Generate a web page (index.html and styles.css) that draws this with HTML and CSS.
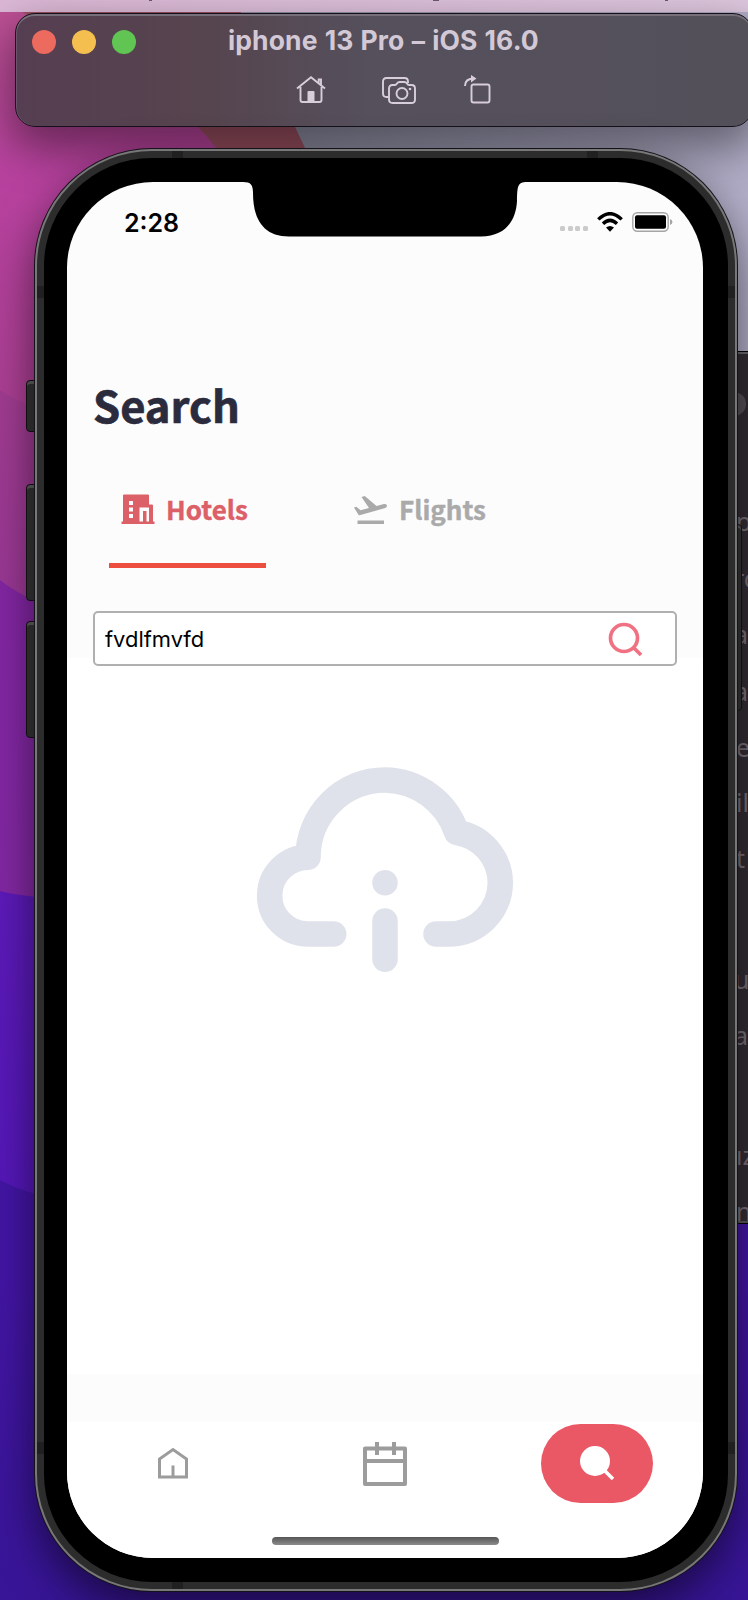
FILE: index.html
```html
<!DOCTYPE html>
<html lang="en">
<head>
<meta charset="utf-8">
<title>iphone 13 Pro – iOS 16.0</title>
<link rel="stylesheet" href="styles.css">
</head>
<body>
<main class="desktop">
  <svg class="wallpaper" viewBox="0 0 748 1600" preserveAspectRatio="none" aria-hidden="true">
    <defs>
      <linearGradient id="w1" x1="0" y1="0" x2="0" y2="1"><stop offset="0" stop-color="#bd5293"/><stop offset=".4" stop-color="#b8429f"/><stop offset="1" stop-color="#a83e90"/></linearGradient>
      <linearGradient id="w2" x1="0" y1="0" x2="0" y2="1"><stop offset="0" stop-color="#a03c90"/><stop offset="1" stop-color="#8d2f98"/></linearGradient>
      <linearGradient id="w3" x1="0" y1="0" x2="0" y2="1"><stop offset="0" stop-color="#8226a2"/><stop offset="1" stop-color="#8228a2"/></linearGradient>
      <linearGradient id="w4" x1="0" y1="0" x2="0" y2="1"><stop offset="0" stop-color="#5c1ab8"/><stop offset="1" stop-color="#5417b8"/></linearGradient>
      <linearGradient id="w5" x1="0" y1="0" x2="0" y2="1"><stop offset="0" stop-color="#4315a4"/><stop offset=".8" stop-color="#4315a4"/><stop offset="1" stop-color="#371596"/></linearGradient>
      <linearGradient id="w6" x1="0" y1="0" x2="1" y2="0"><stop offset="0" stop-color="#747888"/><stop offset="1" stop-color="#b2aec8"/></linearGradient>
    </defs>
    <rect width="748" height="1600" fill="url(#w5)"/>
    <path d="M0 0H748V400H400Z" fill="url(#w6)"/>
    <path d="M0 0H235L306 150V400H0Z" fill="#9a5060"/>
    <path d="M0 0L110 60Q180 100 217 149V430H0Z" fill="url(#w1)"/>
    <path d="M0 390Q20 405 60 412V900H0Z" fill="url(#w2)"/>
    <path d="M0 580Q20 596 60 612V920H0Z" fill="url(#w3)"/>
    <path d="M0 891Q20 896 60 899V1202L36 1194Q20 1190 0 1180Z" fill="url(#w4)"/>
  </svg>
  <section class="editor" aria-hidden="true">
    <span class="dot"></span>
    <div class="code"><span>p</span><span class="shift">ro</span><span class="shift">al</span><span class="shift">a</span><span>e</span><span>il</span><span>t</span><span></span><span class="shift">uc</span><span class="shift">as</span><span></span><span>ız</span><span>n</span></div>
  </section>
  <div class="menubar" aria-hidden="true"><i></i><i></i><i></i></div>
  <header class="titlebar">
    <div class="title-row">
      <div class="lights"><i class="close"></i><i class="min"></i><i class="max"></i></div>
      <h2 class="title">iphone 13 Pro – iOS 16.0</h2>
    </div>
    <div class="tools">
      <svg width="32" height="30" viewBox="0 0 32 30"><path d="M2 13.5 16 2.3 30 13.5M5.500 12v13Q5.500 27 7.500 27H24.500Q26.500 27 26.500 25V12M23.700 8.500V4.500H26V10"/><path class="solid" d="M12.500 27V17Q12.500 16 13.500 16H18.500Q19.500 16 19.500 17V27Z"/></svg>
      <svg width="36" height="30" viewBox="0 0 36 30"><path d="M7.500 22H5.500Q2 22 2 18.500V6.500Q2 3 5.500 3H23.500Q27 3 27 6.500V8"/><path d="M11.500 10H14Q15 10 16 8.500 17 7 18.500 7H23.500Q25 7 26 8.500 27 10 28 10H30.500Q34 10 34 13.500V24.500Q34 28 30.500 28H11.500Q8 28 8 24.500V13.500Q8 10 11.500 10Z"/><circle cx="21" cy="18.500" r="5.500"/><circle class="solid" cx="29" cy="14" r="1.300"/></svg>
      <svg width="30" height="32" viewBox="0 0 30 32"><rect x="8.500" y="11.500" width="18" height="18" rx="2"/><path d="M2 13Q2 5.500 11 5.500"/><path class="solid" d="M8 2 13.500 5.500 8 9.500Z"/></svg>
    </div>
  </header>
  <i class="key k1"></i><i class="key k2"></i><i class="key k3"></i><i class="key k4"></i>
  <section class="phone">
    <i class="band b1"></i><i class="band b2"></i><i class="band b3"></i><i class="band b5"></i><i class="band b6"></i><i class="band b7"></i><i class="band b8"></i>
    <div class="bezel">
      <div class="screen">
        <svg class="notch" viewBox="0 0 284 55" aria-hidden="true"><path d="M0 0C8 0 10 3 10 11C10 38 21 54.500 46 54.500H238C263 54.500 273 38 274 19C274.500 5 274 0 284 0Z"/></svg>
        <div class="status">
          <span class="time">2:28</span>
          <div class="signals">
            <span class="cell"><i></i><i></i><i></i><i></i></span>
            <svg class="wifi" width="28" height="20" viewBox="0 0 28 20"><path d="M2.300 7.400Q14-4 25.700 7.400" /><path d="M7 11.800Q14 5 21 11.800"/><path class="wedge" d="M10 15.600Q14 12.200 18 15.600L14 19.700Z"/></svg>
            <svg class="battery" width="41" height="20" viewBox="0 0 41 20"><rect x=".8" y=".8" width="35.400" height="18.400" rx="4.500"/><rect class="fill" x="3" y="3.300" width="31" height="13.400" rx="2"/><path class="tip" d="M38 7Q40.500 8 40.500 10T38 13Z"/></svg>
          </div>
        </div>
        <div class="content">
          <h1 class="heading">Search</h1>
          <nav class="tabs">
            <a class="tab active"><svg width="34" height="30" viewBox="0 0 34 30"><path fill-rule="evenodd" d="M2 27.500V1.500Q2 .5 3 .5H27Q28 .5 28 1.500V10.500H31Q32 10.500 32 11.500V27.500H33.500V30H.5V27.500ZM8 7V11H12V7ZM8 13.500V17.500H12V13.500ZM8 20V24H12V20ZM18.500 13.500V27.500H22V17H25.500V27.500H28V13.500Z"/></svg><span>Hotels</span></a>
            <a class="tab"><svg width="35" height="30" viewBox="0 0 35 30"><path d="M4.500 26.500H31V30H4.500ZM1 13.500 3.300 12.700 7.500 16.200 16 14 8.500 3 11.800 2 23.500 12 31 10Q33.500 9.500 34 11.500 34.200 13.200 32.300 14L7.500 21 5.800 21.300Z"/></svg><span>Flights</span></a>
          </nav>
          <div class="field"><span>fvdlfmvfd</span><svg width="36" height="36" viewBox="0 0 36 36"><circle cx="17" cy="17" r="13.500"/><path d="M26.500 26.500 34 34"/></svg></div>
        </div>
        <div class="results">
          <svg width="260" height="208" viewBox="0 0 260 208" aria-label="No results"><path d="M77.700 167H52A38.350 38.350 0 0 1 52 90.300A77 77.300 0 0 1 129 13A77 77.300 0 0 1 200.700 65.300A51.500 51.500 0 0 1 244.300 115.700A51.500 51.500 0 0 1 193 167H180M129 115.700H129.010M129 154V192.300"/></svg>
        </div>
        <footer class="tabbar">
          <a class="nav-item"><svg width="32" height="32" viewBox="0 0 32 32"><path d="M2.500 30V12L16 2.500 29.500 12V30ZM16 30V18.500"/></svg></a>
          <a class="nav-item"><svg class="calendar" width="44" height="44" viewBox="0 0 44 44"><path d="M2 6.500H42V42H2ZM2 19H42M14 0V13M31 0V13"/></svg></a>
          <a class="nav-item selected"><svg width="34" height="34" viewBox="0 0 34 34"><circle cx="15" cy="15" r="15"/><path d="M25 25 33 33"/></svg></a>
          <i class="indicator"></i>
        </footer>
      </div>
    </div>
  </section>
</main>
</body>
</html>
```
FILE: styles.css
```css
* { box-sizing: border-box; }
body { margin: 0; font-family: Inter, "Liberation Sans", sans-serif; }
svg { display: block; flex: none; }
.desktop { position: relative; width: 748px; height: 1600px; overflow: hidden; }
.wallpaper { position: absolute; inset: 0; width: 748px; height: 1600px; }
.menubar { position: absolute; left: 0; top: 0; display: flex; gap: 228px; width: 748px; height: 12px; padding-left: 149px; background: linear-gradient(90deg, #dcb8d6, #dec8df); }
.menubar i { width: 3px; height: 1px; background: #6b596c; }
.menubar i + i { width: 6px; margin-left: 53px; }
.menubar i + i + i { width: 3px; margin-left: -2px; }

/* Window behind the simulator */
.editor { position: absolute; left: 600px; top: 351px; width: 180px; height: 873px; background: #332b34; border: 1px solid #000; box-shadow: inset 0 2px #6b686d, inset 0 -2px #5b565d; }
.dot { position: absolute; left: 121px; top: 40px; width: 24px; height: 24px; border-radius: 50%; background: #575057; }
.code { position: absolute; left: 135px; top: 141px; display: grid; grid-template-rows: 57px 56px 57px 56px 55px 56px 60px 61px 56px 60px 60px 56px 57px; font: 25px "Noto Sans", sans-serif; line-height: 57px; color: #787078; }
.shift { margin-left: -2px; }

/* Simulator title window */
.titlebar { position: absolute; left: 15px; top: 13px; width: 738px; height: 114px; padding-top: 12px; border: 1px solid #15101a; border-radius: 20px; background: linear-gradient(90deg, #553e51, #56444e 25%, #55505c 48%, #54505a); box-shadow: inset 0 2px #77707a, inset 1px 0 #69566a, 0 18px 44px 4px rgba(0, 0, 0, .44); }
.title-row { display: flex; align-items: center; height: 32px; padding-left: 16px; }
.lights { display: flex; gap: 16px; width: 195px; }
.lights i { width: 24px; height: 24px; border-radius: 50%; }
.close { background: #ed6a5e; }
.min { background: #f4bf4f; }
.max { background: #61c554; }
.title { margin: -4px 0 0 1px; font-size: 26.500px; font-weight: 700; line-height: 32px; letter-spacing: .1px; word-spacing: .8px; white-space: nowrap; color: #d3c9d6; }
.tools { display: flex; align-items: center; gap: 54px; height: 32px; margin: 16px 0 0 279px; }
.tools svg { fill: none; stroke: #d7ceda; stroke-width: 1.900; }
.tools svg:last-child { margin: -2px 0 0 -8px; }
.tools svg .solid { fill: #d7ceda; stroke: none; }

/* Device */
.phone { position: absolute; left: 35px; top: 149px; width: 702px; height: 1442px; padding: 7px; border: 2px solid #777; border-radius: 117px; background: #2c2c2c; box-shadow: 0 0 0 1px #16121b, 0 18px 44px 0 rgba(0, 0, 0, .55); }
.bezel { width: 684px; height: 1424px; padding: 24px 25px 24px 23px; border-radius: 108px; background: #000; }
.screen { position: relative; display: flex; flex-direction: column; width: 636px; height: 1376px; overflow: hidden; border-radius: 86px; background: #fcfcfd; }
.band { position: absolute; background: #202020; }
.b1, .b2, .b3 { width: 11px; height: 7px; }
.b1, .b2 { top: 0; }
.b3 { bottom: 0; }
.b1, .b3 { left: 135px; }
.b2 { left: 550px; }
.b5, .b6, .b7, .b8 { width: 7px; height: 12px; }
.b5, .b6 { top: 1291px; }
.b7, .b8 { top: 135px; }
.b5, .b7 { left: 0; }
.b6, .b8 { right: 0; }
.key { position: absolute; left: 26px; width: 12px; border: 1px solid #171318; border-radius: 4px 0 0 4px; background: #353535; box-shadow: inset 0 3px #606060; }
.k1 { top: 380px; height: 52px; }
.k2 { top: 484px; height: 117px; }
.k3 { top: 621px; height: 117px; }
.k4 { left: 733px; top: 524px; width: 9px; height: 187px; border-radius: 0 4px 4px 0; }

.notch { position: absolute; left: 176px; top: 0; width: 284px; height: 55px; }
.status { display: flex; justify-content: space-between; height: 80px; padding: 27px 30px 0 57px; }
.time { font-size: 25px; font-weight: 600; line-height: 28px; }
.signals { display: flex; align-items: flex-start; padding-top: 3px; }
.cell { display: flex; gap: 2.700px; margin: 14px 8px 0 0; }
.cell i { width: 5px; height: 5px; border-radius: 1.500px; background: #cbcbcb; }
.wifi { margin-right: 8px; fill: none; stroke: #000; stroke-width: 3.400; }
.wifi .wedge { fill: #000; stroke: none; }
.battery { fill: none; stroke: #a5a5a5; stroke-width: 1.400; }
.battery .fill { fill: #000; stroke: none; }
.battery .tip { fill: #a5a5a5; stroke: none; }

.content { position: relative; z-index: 1; height: 396px; padding: 112px 26px 0; }
.heading { margin: 0; font: 700 43.500px/62px "Noto Sans CJK SC", sans-serif; color: #2b2b3e; -webkit-text-stroke: .7px #2b2b3e; }
.tabs { display: flex; gap: 76px; height: 91px; margin: 46px 0 0 16px; }
.tab { display: flex; justify-content: flex-start; gap: 11px; width: 157px; padding: 12px 0 0 12px; font: 700 26px/30px "Noto Sans CJK SC", sans-serif; color: #aaa; -webkit-text-stroke: .4px currentColor; border-bottom: 5px solid transparent; }
.tab + .tab { padding-left: 11px; }
.tab svg { fill: currentColor; }
.tab.active { height: 86px; color: #dc6067; border-color: #ee4e3e; }
.field { display: flex; align-items: center; justify-content: space-between; height: 55px; margin-top: 38px; padding: 0 32.500px 0 10px; border: 2px solid #b0b0b0; border-radius: 5px; background: #fff; font-size: 21.900px; color: #000; }
.field svg { fill: none; stroke: #f07282; stroke-width: 3.700; }
.results { flex: none; height: 716px; padding: 109px 0 0 189px; background: #fff; }
.results path { fill: none; stroke: #dfe2ea; stroke-width: 25.500; stroke-linecap: round; stroke-linejoin: round; }
.tabbar { position: relative; display: flex; align-items: flex-start; height: 136px; margin-top: 48px; padding: 2px 50px 0 50px; background: #fff; justify-content: space-between; }
.nav-item { display: flex; justify-content: center; align-items: center; width: 112px; height: 79px; }
.nav-item svg { margin-top: -1px; fill: none; stroke: #9c9c9c; stroke-width: 3; }
.nav-item .calendar { margin-top: 0; stroke-width: 4; stroke-linejoin: round; }
.nav-item.selected { border-radius: 40px; background: #eb5865; }
.nav-item.selected svg { margin: -2px 0 0 -1px; fill: #fff; stroke: none; }
.nav-item.selected path { stroke: #fff; stroke-width: 3.500; }
.indicator { position: absolute; left: 205px; bottom: 13px; width: 227px; height: 8px; border-radius: 4px; background: linear-gradient(#555, #8c8c8c); }
```
